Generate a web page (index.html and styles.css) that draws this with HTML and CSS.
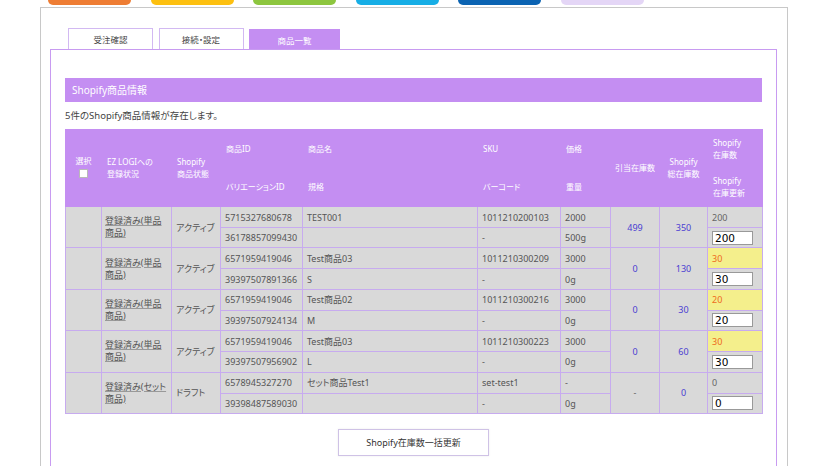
FILE: index.html
```html
<!DOCTYPE html>
<html lang="ja">
<head>
  <meta charset="UTF-8" />
  <meta name="viewport" content="width=device-width, initial-scale=1.0" />
  <title>商品一覧 – Shopify連携</title>
  <link rel="stylesheet" href="styles.css">
</head>
<body>

  <div class="menu">
    <span class="m-orange"></span>
    <span class="m-yellow"></span>
    <span class="m-green"></span>
    <span class="m-cyan"></span>
    <span class="m-blue"></span>
    <span class="m-lilac"></span>
  </div>

  <div class="frame">
    <div class="tabs">
      <a class="tab">受注確認</a>
      <a class="tab">接続・設定</a>
      <a class="tab active">商品一覧</a>
    </div>

    <div class="panel">
      <h3 class="sec-title">Shopify商品情報</h3>
      <p class="note">5件のShopify商品情報が存在します。</p>

      <table class="items">
        <colgroup>
          <col style="width:36px">
          <col style="width:70px">
          <col style="width:49px">
          <col style="width:82px">
          <col style="width:175px">
          <col style="width:83px">
          <col style="width:50px">
          <col style="width:49px">
          <col style="width:48px">
          <col style="width:55px">
        </colgroup>
        <thead>
          <tr>
            <th rowspan="2" class="ctr">選択<br><input type="checkbox" class="chk"></th>
            <th rowspan="2">EZ LOGIへの<br>登録状況</th>
            <th rowspan="2">Shopify<br>商品状態</th>
            <th>商品ID</th>
            <th>商品名</th>
            <th>SKU</th>
            <th>価格</th>
            <th rowspan="2" class="ctr">引当在庫数</th>
            <th rowspan="2" class="ctr">Shopify<br>総在庫数</th>
            <th>Shopify<br>在庫数</th>
          </tr>
          <tr>
            <th>バリエーションID</th>
            <th>規格</th>
            <th>バーコード</th>
            <th>重量</th>
            <th>Shopify<br>在庫更新</th>
          </tr>
        </thead>
        <tbody>
          <tr class="top">
            <td rowspan="2"></td>
            <td rowspan="2" class="reg"><a>登録済み(単品商品)</a></td>
            <td rowspan="2">アクティブ</td>
            <td>5715327680678</td>
            <td>TEST001</td>
            <td>1011210200103</td>
            <td>2000</td>
            <td rowspan="2" class="num">499</td>
            <td rowspan="2" class="num">350</td>
            <td class="stk">200</td>
          </tr>
          <tr class="bot">
            <td>36178857099430</td>
            <td></td>
            <td>-</td>
            <td>500g</td>
            <td class="upd"><input type="text" value="200"></td>
          </tr>

          <tr class="top">
            <td rowspan="2"></td>
            <td rowspan="2" class="reg"><a>登録済み(単品商品)</a></td>
            <td rowspan="2">アクティブ</td>
            <td>6571959419046</td>
            <td>Test商品03</td>
            <td>1011210300209</td>
            <td>3000</td>
            <td rowspan="2" class="num">0</td>
            <td rowspan="2" class="num">130</td>
            <td class="stk diff">30</td>
          </tr>
          <tr class="bot">
            <td>39397507891366</td>
            <td>S</td>
            <td>-</td>
            <td>0g</td>
            <td class="upd"><input type="text" value="30"></td>
          </tr>

          <tr class="top">
            <td rowspan="2"></td>
            <td rowspan="2" class="reg"><a>登録済み(単品商品)</a></td>
            <td rowspan="2">アクティブ</td>
            <td>6571959419046</td>
            <td>Test商品02</td>
            <td>1011210300216</td>
            <td>3000</td>
            <td rowspan="2" class="num">0</td>
            <td rowspan="2" class="num">30</td>
            <td class="stk diff">20</td>
          </tr>
          <tr class="bot">
            <td>39397507924134</td>
            <td>M</td>
            <td>-</td>
            <td>0g</td>
            <td class="upd"><input type="text" value="20"></td>
          </tr>

          <tr class="top">
            <td rowspan="2"></td>
            <td rowspan="2" class="reg"><a>登録済み(単品商品)</a></td>
            <td rowspan="2">アクティブ</td>
            <td>6571959419046</td>
            <td>Test商品03</td>
            <td>1011210300223</td>
            <td>3000</td>
            <td rowspan="2" class="num">0</td>
            <td rowspan="2" class="num">60</td>
            <td class="stk diff">30</td>
          </tr>
          <tr class="bot">
            <td>39397507956902</td>
            <td>L</td>
            <td>-</td>
            <td>0g</td>
            <td class="upd"><input type="text" value="30"></td>
          </tr>

          <tr class="top">
            <td rowspan="2"></td>
            <td rowspan="2" class="reg"><a>登録済み(セット商品)</a></td>
            <td rowspan="2">ドラフト</td>
            <td>6578945327270</td>
            <td>セット商品Test1</td>
            <td>set-test1</td>
            <td>-</td>
            <td rowspan="2" class="num none">-</td>
            <td rowspan="2" class="num">0</td>
            <td class="stk">0</td>
          </tr>
          <tr class="bot">
            <td>39398487589030</td>
            <td></td>
            <td>-</td>
            <td>0g</td>
            <td class="upd"><input type="text" value="0"></td>
          </tr>
        </tbody>
      </table>

      <div class="actions">
        <button class="btn">Shopify在庫数一括更新</button>
      </div>
    </div>
  </div>

</body>
</html>
```

FILE: styles.css
```css
html, body {
  margin: 0;
  height: 466px;
  overflow: hidden;
  background: #fff;
}
body {
  font-family: "Noto Sans", "Noto Sans CJK JP", sans-serif;
  font-feature-settings: "palt";
  font-size: 9px;
  color: #555;
}

/* colored menu buttons scrolled off the top */
.menu {
  display: flex;
  gap: 19.6px;
  padding-left: 48px;
  height: 5px;
}
.menu span {
  width: 83px;
  height: 5px;
  border-radius: 0 0 7px 7px;
}
.m-orange { background: #ee7d34; }
.m-yellow { background: #fdc010; }
.m-green  { background: #8dc63f; }
.m-cyan   { background: #17aee6; }
.m-blue   { background: #0b63b2; }
.m-lilac  { background: #e4d6f6; }

.frame {
  margin: 2px 0 0 40px;
  width: 746px;
  height: 600px;
  border: 1px solid #c8c8c8;
  padding-top: 20px;
}

.tabs {
  display: flex;
  align-items: flex-end;
  gap: 5.5px;
  height: 21px;
  margin-left: 27px;
}
.tab {
  box-sizing: border-box;
  width: 85px;
  height: 21px;
  display: flex;
  align-items: center;
  justify-content: center;
  background: #fff;
  border: 1px solid #d2b9f2;
  border-bottom: none;
  font-size: 8.5px;
  color: #444;
}
.tab.active {
  width: 91px;
  height: 20px;
  background: #c48ef2;
  border-color: #c48ef2;
  color: #fff;
}

.panel {
  box-sizing: border-box;
  margin-left: 9px;
  width: 727px;
  height: 520px;
  border: 1px solid #c89bf1;
  padding: 28px 14px 0;
}

.sec-title {
  margin: 0;
  height: 24px;
  line-height: 24px;
  padding-left: 7px;
  background: #c48ef2;
  color: #fff;
  font-size: 10px;
  font-weight: normal;
}
.note {
  margin: 8px 0 7px;
  line-height: 12px;
  font-size: 9.5px;
  color: #444;
}

.items {
  width: 697px;
  table-layout: fixed;
  border-collapse: collapse;
}
.items th {
  background: #c48ef2;
  border: 1px solid #c48ef2;
  color: #fff;
  font-size: 8px;
  font-weight: normal;
  text-align: left;
  line-height: 12px;
  padding: 0 5px;
  height: 37.5px;
}
.items th.ctr {
  text-align: center;
  padding: 0 2px;
}
.chk {
  appearance: none;
  display: inline-block;
  width: 9px;
  height: 9px;
  margin: 2px 0 0;
  background: #fff;
  border: 1px solid #b9b9b9;
}
.items td {
  background: #d9d9d9;
  border: 1px solid #c7abef;
  padding: 0 4px;
  white-space: nowrap;
  overflow: hidden;
  line-height: 11px;
}
.items tr.top td { height: 20px; }
.items tr.bot td { height: 19.4px; }
.items td.reg {
  white-space: normal;
  padding: 0 2px 0 3px;
  line-height: 12px;
}
.reg a {
  color: #555;
  text-decoration: underline;
  text-decoration-color: #999;
}
.items td.num {
  text-align: center;
  color: #4a40d2;
}
.items td.num.none { color: #666; }
.items td.stk { color: #666; }
.items td.stk.diff {
  background: #f4ef8c;
  color: #ee6b1c;
}
.items td.upd { padding: 0 4px; }
.upd input {
  box-sizing: border-box;
  width: 41px;
  height: 14px;
  margin: 0;
  padding: 0 2px;
  border: 1px solid #999;
  background: #fff;
  color: #000;
  font-family: "DejaVu Sans", sans-serif;
  font-size: 10.5px;
}

.actions {
  text-align: center;
  padding-top: 15px;
}
.btn {
  width: 151px;
  height: 27px;
  background: #fff;
  border: 1px solid #cfc2e6;
  box-shadow: 0 0 2px rgba(0,0,0,0.08);
  font-family: inherit;
  font-feature-settings: "palt";
  font-size: 9px;
  color: #333;
}
```
